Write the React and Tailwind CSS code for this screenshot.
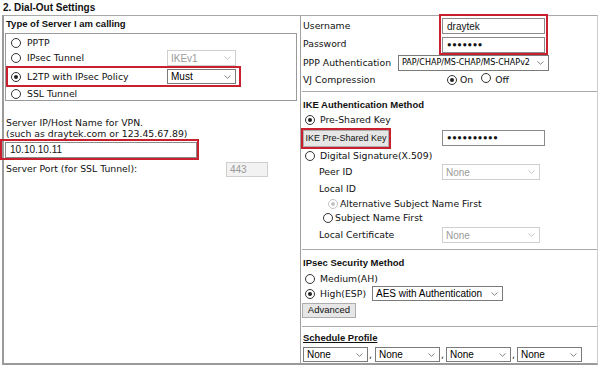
import React from "react";

const RED = "border-[#c8202f]";

function Radio({ checked, disabled }) {
  return (
    <span
      className={`inline-flex items-center justify-center w-[10px] h-[10px] rounded-full border bg-white shrink-0 ${
        disabled ? "border-[#c4c4c4]" : "border-[#333]"
      }`}
    >
      {checked && (
        <span
          className={`w-[4px] h-[4px] rounded-full ${
            disabled ? "bg-[#c4c4c4]" : "bg-[#222]"
          }`}
        />
      )}
    </span>
  );
}

function Chevron({ disabled }) {
  return (
    <svg width="7" height="4" viewBox="0 0 7 4" className="shrink-0">
      <path
        d="M0.5 0.5 L3.5 3.3 L6.5 0.5"
        fill="none"
        stroke={disabled ? "#c0c0c0" : "#777"}
        strokeWidth="0.9"
      />
    </svg>
  );
}

function Select({ text, w, h = "h-[16px]", disabled, verdana }) {
  return (
    <div
      className={`${w} ${h} flex items-center justify-between pl-[3px] pr-[4px] bg-white border shrink-0 ${
        disabled ? "border-[#cfcfcf] text-[#9a9a9a]" : "border-[#7a7a7a] text-black"
      } ${
        verdana
          ? "font-['DejaVu_Sans',sans-serif] text-[8px]"
          : "font-['Liberation_Sans',Arial,sans-serif] text-[10px]"
      }`}
    >
      <span className="whitespace-nowrap">{text}</span>
      <Chevron disabled={disabled} />
    </div>
  );
}

function TextInput({ w, value, dots }) {
  return (
    <div
      className={`${w} h-[16px] flex items-center pl-[4px] bg-white border border-[#8a8a8a] font-['Liberation_Sans',Arial,sans-serif] text-[10px] shrink-0`}
    >
      {dots ? (
        <span className="text-[7.5px] tracking-[0.6px] leading-none">
          {"●".repeat(dots)}
        </span>
      ) : (
        value
      )}
    </div>
  );
}

const bold = "font-bold font-['Liberation_Sans',Arial,sans-serif] text-[9.5px]";

export default function App() {
  return (
    <div className="w-[600px] h-[367px] bg-white text-[#111] font-['DejaVu_Sans',sans-serif] text-[9.3px] overflow-hidden">
      <div className={`h-[15px] pl-[3px] flex items-center ${bold} text-[10px]`}>
        2. Dial-Out Settings
      </div>

      <div className="ml-[2px] w-[596px] h-[350px] flex border-l-2 border-l-[#9a9a9a] border-t border-t-[#a8a8a8] border-r border-r-[#cfcfcf] border-b-2 border-b-[#9a9a9a]">
        {/* left column */}
        <div className="w-[297px] shrink-0 flex flex-col border-r border-r-[#a0a0a0]">
          <div className={`h-[17px] pl-[2px] flex items-center ${bold}`}>
            Type of Server I am calling
          </div>
          <div className="ml-[1px] w-[292px] h-[68px] border border-[#9a9a9a] flex flex-col pt-[2px]">
            <div className="h-[14px] flex items-center pl-[5px]">
              <Radio />
              <span className="ml-[6px]">PPTP</span>
            </div>
            <div className="h-[17px] flex items-center pl-[5px]">
              <Radio />
              <span className="ml-[6px] w-[140px]">IPsec Tunnel</span>
              <Select text="IKEv1" w="w-[69px]" disabled />
            </div>
            <div className={`h-[21px] w-[235px] flex items-center pl-[3px] border-2 ${RED}`}>
              <Radio checked />
              <span className="ml-[6px] w-[140px]">L2TP with IPsec Policy</span>
              <Select text="Must" w="w-[69px]" h="h-[15px]" />
            </div>
            <div className="h-[13px] flex items-center pl-[5px]">
              <Radio />
              <span className="ml-[6px]">SSL Tunnel</span>
            </div>
          </div>

          <div className="mt-[16px] pl-[2px] leading-[11px]">
            <div>Server IP/Host Name for VPN.</div>
            <div>(such as draytek.com or 123.45.67.89)</div>
          </div>
          <div className={`-ml-[4px] w-[199px] h-[21px] border-2 ${RED} pl-[3px] flex items-center`}>
            <TextInput w="w-[192px]" value="10.10.10.11" />
          </div>
          <div className="h-[18px] flex items-center pl-[2px]">
            <span className="w-[220px]">Server Port (for SSL Tunnel):</span>
            <div className="w-[42px] h-[15px] flex items-center pl-[3px] bg-[#f2f2f2] border border-[#cfcfcf] text-[#9a9a9a] font-['Liberation_Sans',Arial,sans-serif] text-[10px]">
              443
            </div>
          </div>
        </div>

        {/* right column */}
        <div className="flex-1 flex flex-col pl-[2px]">
          <div className="flex">
            <div className="w-[136px] flex flex-col">
              <div className="h-[19px] flex items-center">Username</div>
              <div className="h-[18px] flex items-center">Password</div>
            </div>
            <div className={`-mt-[2px] border-2 ${RED} px-[1px] pt-[2px] flex flex-col gap-[3px] h-[41px]`}>
              <TextInput w="w-[103px]" value="draytek" />
              <TextInput w="w-[103px]" dots={7} />
            </div>
          </div>
          <div className="h-[16px] flex items-center">
            <span className="w-[95px]">PPP Authentication</span>
            <Select text="PAP/CHAP/MS-CHAP/MS-CHAPv2" w="w-[151px]" verdana />
          </div>
          <div className="h-[17px] flex items-center">
            <span className="w-[144px]">VJ Compression</span>
            <Radio checked />
            <span className="ml-[3px]">On</span>
            <span className="ml-[8px]">
              <Radio />
            </span>
            <span className="ml-[4px]">Off</span>
          </div>
          <div className="h-px bg-[#a8a8a8] mt-[3px] -ml-[1px]" />

          <div className={`mt-[6px] h-[14px] flex items-center ${bold}`}>
            IKE Authentication Method
          </div>
          <div className="h-[16px] flex items-center pl-[2px]">
            <Radio checked />
            <span className="ml-[5px]">Pre-Shared Key</span>
          </div>
          <div className="flex items-start">
            <div className={`-ml-[2px] w-[90px] h-[21px] border-2 ${RED}`}>
              <div className="h-full bg-[#e6e6e6] border border-[#adadad] flex items-center justify-center whitespace-nowrap font-['Liberation_Sans',Arial,sans-serif] text-[9px]">
                IKE Pre-Shared Key
              </div>
            </div>
            <div className="ml-[51px] mt-[2px]">
              <TextInput w="w-[103px]" dots={10} />
            </div>
          </div>
          <div className="h-[14px] flex items-center pl-[2px]">
            <Radio />
            <span className="ml-[5px]">Digital Signature(X.509)</span>
          </div>
          <div className="h-[18px] flex items-center pl-[16px]">
            <span className="w-[123px]">Peer ID</span>
            <Select text="None" w="w-[98px]" disabled />
          </div>
          <div className="h-[16px] flex items-center pl-[16px]">Local ID</div>
          <div className="h-[13px] flex items-center pl-[25px]">
            <Radio checked disabled />
            <span className="ml-[2px]">Alternative Subject Name First</span>
          </div>
          <div className="h-[16px] flex items-center pl-[20px]">
            <Radio />
            <span className="ml-[2px]">Subject Name First</span>
          </div>
          <div className="h-[18px] flex items-center pl-[16px]">
            <span className="w-[123px]">Local Certificate</span>
            <Select text="None" w="w-[98px]" disabled />
          </div>
          <div className="h-px bg-[#a8a8a8] mt-[5px] -ml-[1px]" />

          <div className={`mt-[5px] h-[16px] flex items-center ${bold}`}>
            IPsec Security Method
          </div>
          <div className="h-[15px] flex items-center pl-[2px]">
            <Radio />
            <span className="ml-[5px]">Medium(AH)</span>
          </div>
          <div className="h-[15px] flex items-center pl-[2px]">
            <Radio checked />
            <span className="ml-[5px] w-[52px]">High(ESP)</span>
            <Select text="AES with Authentication" w="w-[131px]" h="h-[15px]" />
          </div>
          <div className="mt-[2px] -ml-[1px] w-[54px] h-[15px] bg-[#e6e6e6] border border-[#adadad] flex items-center justify-center font-['Liberation_Sans',Arial,sans-serif] text-[9.5px]">
            Advanced
          </div>
          <div className="h-px bg-[#a8a8a8] mt-[8px] -ml-[1px]" />

          <div className={`mt-[4px] h-[14px] flex items-center ${bold} underline`}>
            Schedule Profile
          </div>
          <div className="mt-[2px] flex items-end">
            <Select text="None" w="w-[65px]" h="h-[15px]" />
            <span className="w-[7px] pl-[1px]">,</span>
            <Select text="None" w="w-[65px]" h="h-[15px]" />
            <span className="w-[6px] pl-[1px]">,</span>
            <Select text="None" w="w-[65px]" h="h-[15px]" />
            <span className="w-[6px] pl-[1px]">,</span>
            <Select text="None" w="w-[65px]" h="h-[15px]" />
          </div>
        </div>
      </div>
    </div>
  );
}
